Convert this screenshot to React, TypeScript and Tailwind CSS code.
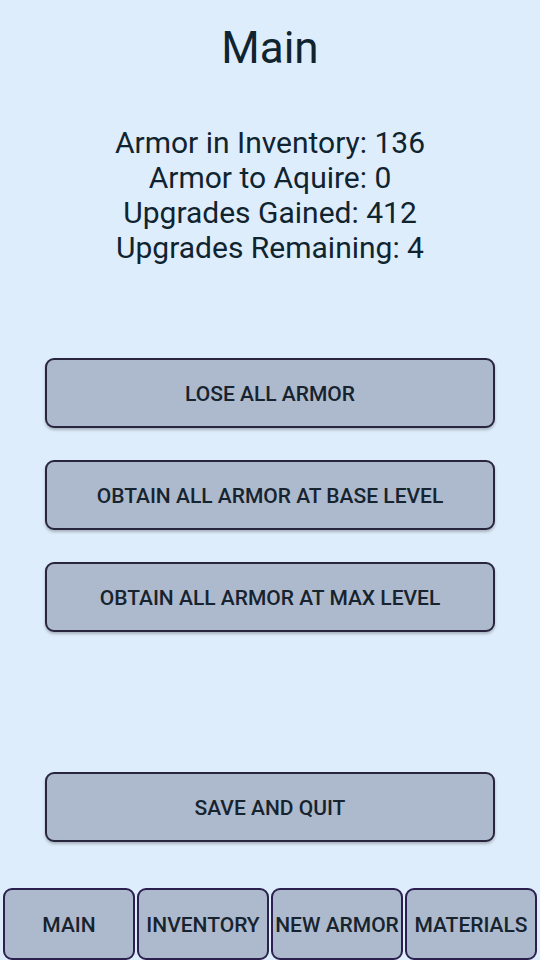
import React from "react";

const btn =
  "h-[70px] w-[450px] rounded-[9px] border-2 border-[#29253f] bg-[#adbacd] text-[21px] font-medium text-[#17232e] shadow-[0_2px_3px_rgba(0,0,0,0.25)] flex items-center justify-center pt-[3px]";
const tab =
  "h-[72px] w-[132px] rounded-[9px] border-2 border-[#2c2050] bg-[#adbacd] text-[21px] font-medium text-[#17232e] flex items-center justify-center whitespace-nowrap pt-[3px]";

export default function App() {
  return (
    <div
      className="w-[540px] h-[960px] bg-[#deedfc] flex flex-col items-center overflow-hidden text-[#102430]"
      style={{ fontFamily: "Roboto, 'Noto Sans', sans-serif" }}
    >
      <h1 className="mt-[22px] text-[44px] leading-[52px]">Main</h1>
      <div className="mt-[51px] flex flex-col items-center text-[30px] leading-[35px]">
        <div>Armor in Inventory: 136</div>
        <div>Armor to Aquire: 0</div>
        <div>Upgrades Gained: 412</div>
        <div>Upgrades Remaining: 4</div>
      </div>
      <div className="mt-[93px] flex flex-col gap-[32px]">
        <div className={btn}>LOSE ALL ARMOR</div>
        <div className={btn}>OBTAIN ALL ARMOR AT BASE LEVEL</div>
        <div className={btn}>OBTAIN ALL ARMOR AT MAX LEVEL</div>
      </div>
      <div className="mt-[140px]">
        <div className={btn}>SAVE AND QUIT</div>
      </div>
      <div className="mt-[46px] flex gap-[2px]">
        <div className={tab}>MAIN</div>
        <div className={tab}>INVENTORY</div>
        <div className={tab}>NEW ARMOR</div>
        <div className={tab}>MATERIALS</div>
      </div>
    </div>
  );
}
